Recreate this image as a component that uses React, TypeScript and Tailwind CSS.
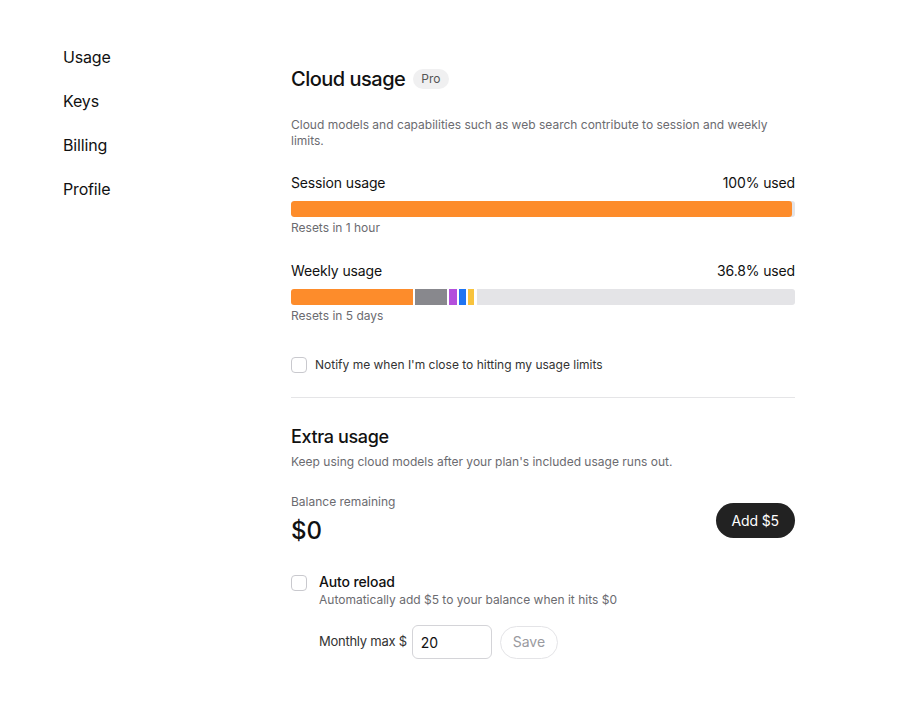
import { useState } from "react";

const nav = ["Usage", "Keys", "Billing", "Profile"];

// weekly usage split by model, in percent of the full bar
const weekly = [
  { pct: 24.3, color: "bg-[#fd8c2b]" },
  { pct: 6.2, color: "bg-[#88888d]" },
  { pct: 1.6, color: "bg-[#b350dc]" },
  { pct: 1.4, color: "bg-[#1f74f2]" },
  { pct: 1.2, color: "bg-[#f8c33d]" },
];

function Checkbox({ checked, onChange }: { checked: boolean; onChange: () => void }) {
  return (
    <button
      onClick={onChange}
      className={`block w-4 h-4 shrink-0 rounded-[4px] border ${
        checked ? "bg-[#1f1f1f] border-[#1f1f1f]" : "bg-white border-[#c9c9ce]"
      }`}
    />
  );
}

export default function App() {
  const [notify, setNotify] = useState(false);
  const [autoReload, setAutoReload] = useState(false);
  const [max, setMax] = useState("20");

  return (
    <div className="min-h-screen bg-white text-[#111] font-['Inter',sans-serif] flex">
      {/* Sidebar */}
      <nav className="w-[291px] shrink-0 pl-[63px] pt-[45px] flex flex-col gap-[20px]">
        {nav.map((item) => (
          <a key={item} className="text-base leading-6 tracking-[-0.01em] text-[#111] cursor-pointer">
            {item}
          </a>
        ))}
      </nav>

      {/* Main */}
      <main className="w-[504px] pt-[65px] pb-10">
        <div className="flex items-center gap-2">
          <h1 className="text-xl leading-7 font-medium tracking-[-0.025em]">Cloud usage</h1>
          <span className="h-5 px-2 rounded-full bg-[#f0f0f1] text-xs leading-5 text-[#555]">Pro</span>
        </div>
        <p className="mt-[24px] text-xs leading-4 text-[#6b6b70]">
          Cloud models and capabilities such as web search contribute to session and weekly limits.
        </p>

        {/* Session */}
        <div className="mt-6 flex justify-between text-sm leading-5 tracking-[-0.01em]">
          <span>Session usage</span>
          <span>100% used</span>
        </div>
        <div className="mt-2 h-4 rounded-[3px] bg-[#e4e4e7] overflow-hidden">
          <div className="h-full bg-[#fd8c2b] rounded-[3px] w-[calc(100%-3px)]" />
        </div>
        <p className="mt-[3px] text-xs leading-4 text-[#6b6b70]">Resets in 1 hour</p>

        {/* Weekly */}
        <div className="mt-[25px] flex justify-between text-sm leading-5 tracking-[-0.01em]">
          <span>Weekly usage</span>
          <span>36.8% used</span>
        </div>
        <div className="mt-2 h-4 rounded-[3px] overflow-hidden flex gap-[2px]">
          {weekly.map((s, i) => (
            <div key={i} className={`h-full ${s.color}`} style={{ width: `${s.pct}%` }} />
          ))}
          <div className="h-full flex-1 bg-[#e4e4e7] ml-[1px]" />
        </div>
        <p className="mt-[3px] text-xs leading-4 text-[#6b6b70]">Resets in 5 days</p>

        <label className="mt-[33px] flex items-center gap-2 text-xs leading-4 text-[#333]">
          <Checkbox checked={notify} onChange={() => setNotify(!notify)} />
          Notify me when I'm close to hitting my usage limits
        </label>

        <div className="mt-6 border-t border-[#e5e5e7]" />

        {/* Extra usage */}
        <h2 className="mt-[25px] text-lg leading-7 font-medium tracking-[-0.02em]">Extra usage</h2>
        <p className="mt-[3px] text-xs leading-4 text-[#6b6b70]">
          Keep using cloud models after your plan's included usage runs out.
        </p>

        <div className="mt-6 flex items-center justify-between">
          <div>
            <p className="text-xs leading-4 text-[#6b6b70]">Balance remaining</p>
            <p className="mt-[5px] text-2xl leading-8 font-medium">$0</p>
          </div>
          <button className="h-[35px] px-4 rounded-full bg-[#222] text-white text-sm tracking-[-0.01em]">
            Add $5
          </button>
        </div>

        <div className="mt-[25px] flex gap-3">
          <div className="pt-[3px]">
            <Checkbox checked={autoReload} onChange={() => setAutoReload(!autoReload)} />
          </div>
          <div>
            <p className="text-sm leading-5 font-medium tracking-[-0.01em]">Auto reload</p>
            <p className="text-xs leading-4 text-[#6b6b70]">Automatically add $5 to your balance when it hits $0</p>
            <div className="mt-[17px] flex items-center gap-[5px]">
              <span className="text-[13px] text-[#333] tracking-[-0.02em]">Monthly max $</span>
              <input
                value={max}
                onChange={(e) => setMax(e.target.value)}
                className="w-20 h-[34px] px-2 rounded-md border border-[#d4d4d8] text-sm outline-none"
              />
              <button className="ml-[3px] h-[33px] px-3 rounded-full border border-[#e4e4e7] text-sm text-[#9a9aa0]">
                Save
              </button>
            </div>
          </div>
        </div>
      </main>
    </div>
  );
}
